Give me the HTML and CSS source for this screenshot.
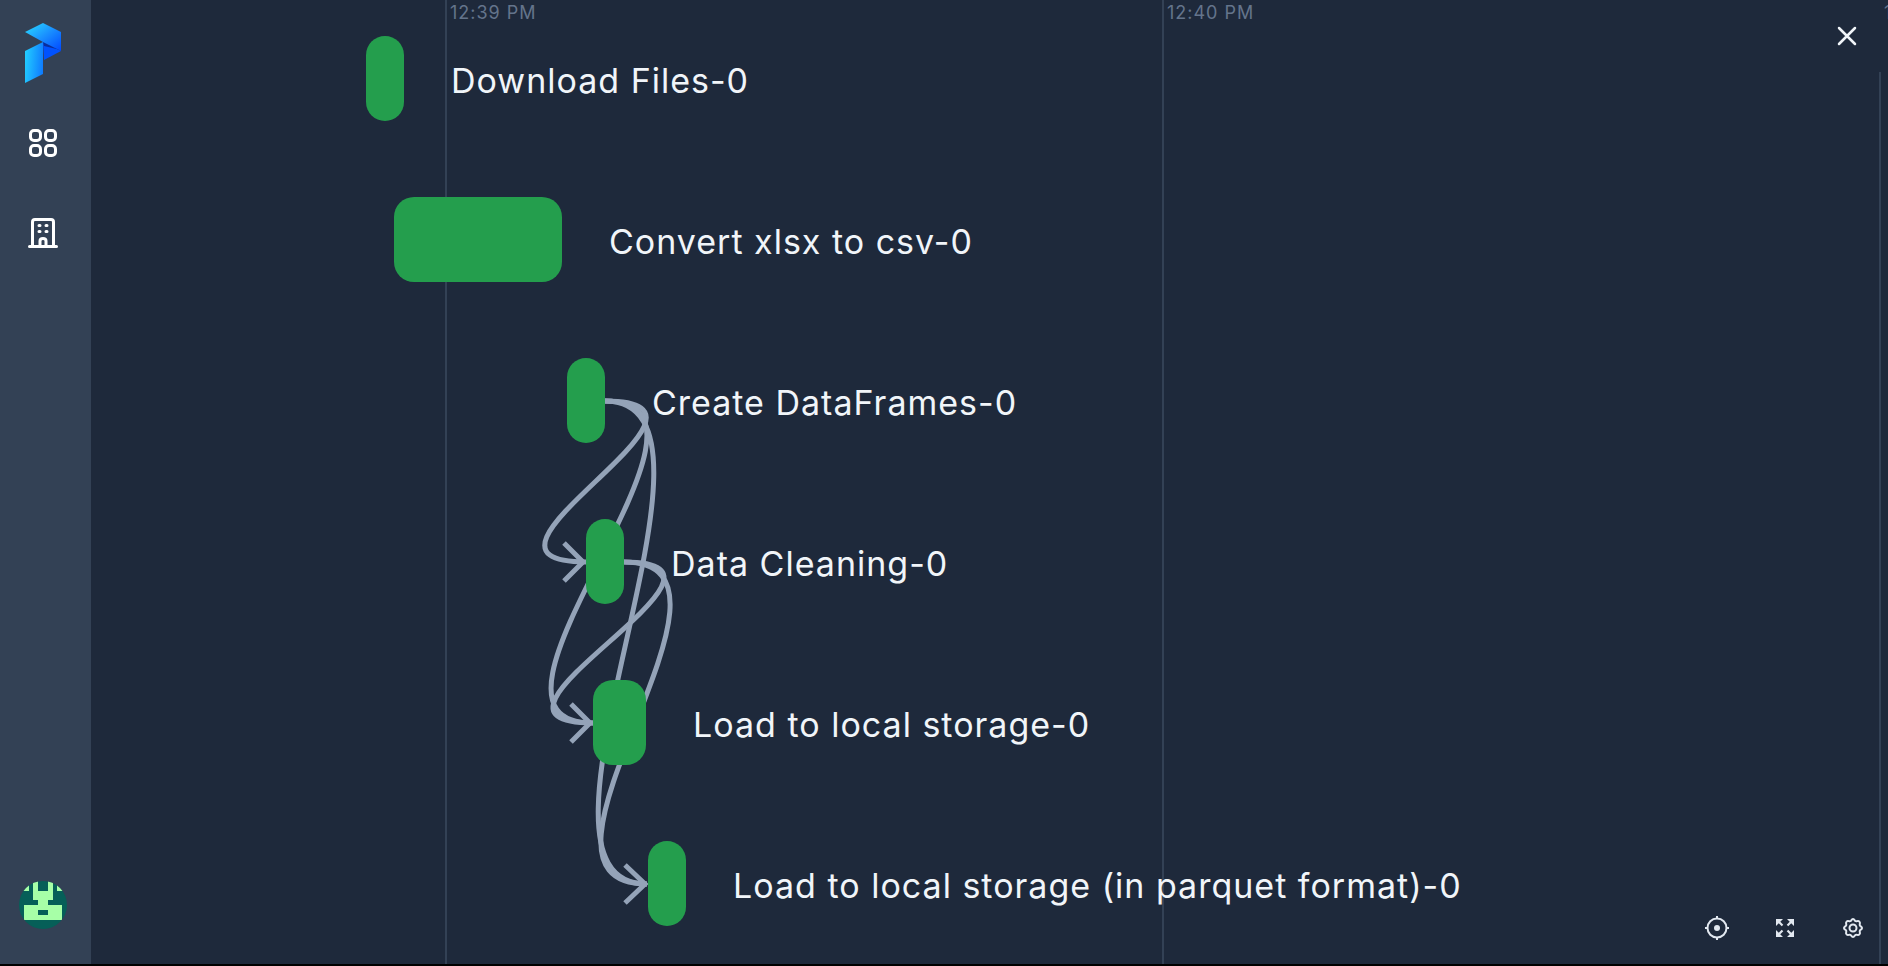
FILE: index.html
```html
<!DOCTYPE html>
<html lang="en">
<head>
<meta charset="utf-8">
<title>Flow run timeline</title>
<link rel="stylesheet" href="styles.css">
</head>
<body>
<div class="app">
  <nav class="sidebar" aria-label="Main">
    <a class="logo" href="#" aria-label="Home">
      <svg width="38" height="62" viewBox="0 0 38 62" aria-hidden="true">
        <defs>
          <linearGradient id="top" x1="0" y1="0" x2="1" y2="1"><stop offset="0" stop-color="#2ae0ff"/><stop offset=".5" stop-color="#1a90ff"/><stop offset="1" stop-color="#0048ff"/></linearGradient>
          <linearGradient id="leg" x1="0" y1=".4" x2="1" y2=".6"><stop offset="0" stop-color="#22ccff"/><stop offset="1" stop-color="#0f7cff"/></linearGradient>
        </defs>
        <path d="M19 20 37 29 20 38Z" fill="#0052ff"/>
        <path d="M19 20 37 28 20 24Z" fill="#0a2d9c"/>
        <path d="M1 10 19 1 37 10V29L19 20Z" fill="url(#top)"/>
        <path d="M1 29 19 20V52L1 61Z" fill="url(#leg)"/>
      </svg>
    </a>
    <a class="nav-link" href="#" aria-label="Workspaces">
      <svg width="32" height="32" viewBox="0 0 32 32" fill="none" stroke="#fff" stroke-width="3" aria-hidden="true">
        <rect x="3.500" y="3.500" width="10" height="10" rx="3.500"/><rect x="18.500" y="3.500" width="10" height="10" rx="3.500"/>
        <rect x="3.500" y="18.500" width="10" height="10" rx="3.500"/><rect x="18.500" y="18.500" width="10" height="10" rx="3.500"/>
      </svg>
    </a>
    <a class="nav-link" href="#" aria-label="Organization">
      <svg width="32" height="32" viewBox="0 0 32 32" fill="none" stroke="#fff" stroke-width="3" stroke-linecap="round" stroke-linejoin="round" aria-hidden="true">
        <path d="M2.500 29.500H29.500M5.500 29V5Q5.500 2.500 8 2.500H24Q26.500 2.500 26.500 5V29"/>
        <path d="M13 29V24Q13 21.500 16 21.500T19 24V29M12 8.500H13M19 8.500H20M12 14.500H13M19 14.500H20"/>
      </svg>
    </a>
    <button class="avatar" type="button" aria-label="Account">
      <svg width="48" height="48" viewBox="0 0 48 48" aria-hidden="true">
        <clipPath id="disc"><circle cx="24" cy="24" r="24"/></clipPath>
        <g clip-path="url(#disc)"><path fill="#065f58" d="M0 0H48V48H0Z"/>
        <path fill="#a7ffa7" d="M0 0H10V10H0ZM38 0H48V10H38ZM14 0H19V10H29V0H34V19H29V24H43V39H5V24H19V19H14Z"/>
        <path fill="#065f58" d="M19 29H29V34H19Z"/></g>
      </svg>
    </button>
  </nav>
  <main class="timeline">
    <div class="grid" aria-hidden="true">
      <span class="tick">12:39 PM</span><span class="tick">12:40 PM</span><span class="tick">12:41 PM</span>
    </div>
    <svg class="edges" fill="none" stroke="#94a3b8" stroke-width="5" aria-hidden="true">
      <path d="M514 401C664 401 345 562 495 562"/>
      <path d="M514 401C664 401 352 723 502 723"/>
      <path d="M514 401C664 401 406 884 556 884"/>
      <path d="M533 562C683 562 352 723 502 723"/>
      <path d="M533 562C683 562 406 884 556 884"/>
      <path d="M473 543 492 562 473 581M480 704 499 723 480 742M534 865 554 884 534 903"/>
    </svg>
    <ol class="rows">
      <li class="row" style="--start:275px;--length:38px"><span class="bar"></span><span class="name">Download Files-0</span></li>
      <li class="row" style="--start:303px;--length:168px"><span class="bar"></span><span class="name">Convert xlsx to csv-0</span></li>
      <li class="row" style="--start:476px;--length:38px"><span class="bar"></span><span class="name">Create DataFrames-0</span></li>
      <li class="row" style="--start:495px;--length:38px"><span class="bar"></span><span class="name">Data Cleaning-0</span></li>
      <li class="row" style="--start:502px;--length:53px"><span class="bar"></span><span class="name">Load to local storage-0</span></li>
      <li class="row" style="--start:557px;--length:38px"><span class="bar"></span><span class="name">Load to local storage (in parquet format)-0</span></li>
    </ol>
    <button class="close" type="button" aria-label="Close">
      <svg width="20" height="20" viewBox="0 0 20 20" fill="none" stroke="#f1f5f9" stroke-width="2.500" stroke-linecap="round" aria-hidden="true"><path d="M2 2 18 18M18 2 2 18"/></svg>
    </button>
    <div class="tools">
      <button type="button" aria-label="Center on now"><svg width="24" height="24" viewBox="0 0 24 24" fill="none" stroke="#e2e8f0" stroke-width="2" aria-hidden="true"><circle cx="12" cy="12" r="9.500"/><circle cx="12" cy="12" r="3" fill="#e2e8f0" stroke="none"/><path d="M12 0V3M12 21V24M0 12H3M21 12H24"/></svg></button>
      <button type="button" aria-label="Full screen"><svg width="24" height="24" viewBox="0 0 24 24" fill="#e2e8f0" stroke="#e2e8f0" stroke-width="2.200" aria-hidden="true"><path stroke="none" d="M3 3H10L3 10ZM21 3V10L14 3ZM21 21H14L21 14ZM3 21V14L10 21Z"/><path d="M4 4 9.500 9.500M20 4 14.500 9.500M20 20 14.500 14.500M4 20 9.500 14.500"/></svg></button>
      <button type="button" aria-label="Settings"><svg width="24" height="24" viewBox="0 0 24 24" fill="none" stroke="#e2e8f0" stroke-width="2" stroke-linejoin="round" aria-hidden="true"><circle cx="12" cy="12" r="3.500"/><path d="M9.300 5.200C10.500 4.700 10.300 3 12 3S13.500 4.700 14.700 5.200 17 4.200 18.400 5.600 18.300 8.100 18.800 9.300 21 10.300 21 12 19.300 13.500 18.800 14.700 19.800 17 18.400 18.400 15.900 18.300 14.700 18.800 13.700 21 12 21 10.500 19.300 9.300 18.800 7 19.800 5.600 18.400 5.700 15.900 5.200 14.700 3 13.700 3 12 4.700 10.500 5.200 9.300 4.200 7 5.600 5.600 8.100 5.700 9.300 5.200Z"/></svg></button>
    </div>
  </main>
</div>
</body>
</html>
```
FILE: styles.css
```css
* { box-sizing: border-box; }
body { margin: 0; background: #000; font-family: Inter, "Liberation Sans", sans-serif; }
button { padding: 0; border: 0; background: none; display: flex; align-items: center; justify-content: center; cursor: pointer; }
svg { display: block; }
.app { display: flex; min-height: 100vh; background: #1e293b; border-bottom: 2px solid #000; }
.sidebar { flex: none; width: 91px; padding: 22px 5px 35px 0; display: flex; flex-direction: column; align-items: center; background: #334155; }
.logo { margin-bottom: 43px; }
.nav-link { margin-bottom: 58px; }
.avatar { margin-top: auto; border-radius: 50%; }
.timeline { position: relative; flex: 1; min-width: 0; overflow: hidden; }
.grid { position: absolute; inset: 0; display: flex; padding-left: 354px; overflow: hidden; }
.tick { flex: none; width: 717px; padding: 2px 3px; border-left: 2px solid #334155; color: #64748b; font-size: 18px; line-height: 22px; letter-spacing: 1px; white-space: nowrap; }
.edges { position: absolute; inset: 0; width: 100%; height: 100%; }
.rows { position: relative; margin: 0; padding: 36px 0 24px; list-style: none; display: grid; gap: 76px; }
.row { display: flex; align-items: center; gap: 47px; padding-left: var(--start); }
.bar { flex: none; width: var(--length); height: 85px; border-radius: 20px; background: #249e4d; }
.name { color: #f1f5f9; font-size: 34px; line-height: 40px; padding-top: 4px; letter-spacing: 1px; white-space: nowrap; }
.close { position: absolute; top: 0; right: 5px; width: 72px; height: 72px; background: #1e293b; }
.tools { position: absolute; right: 23px; bottom: 24px; display: flex; gap: 44px; }
```
